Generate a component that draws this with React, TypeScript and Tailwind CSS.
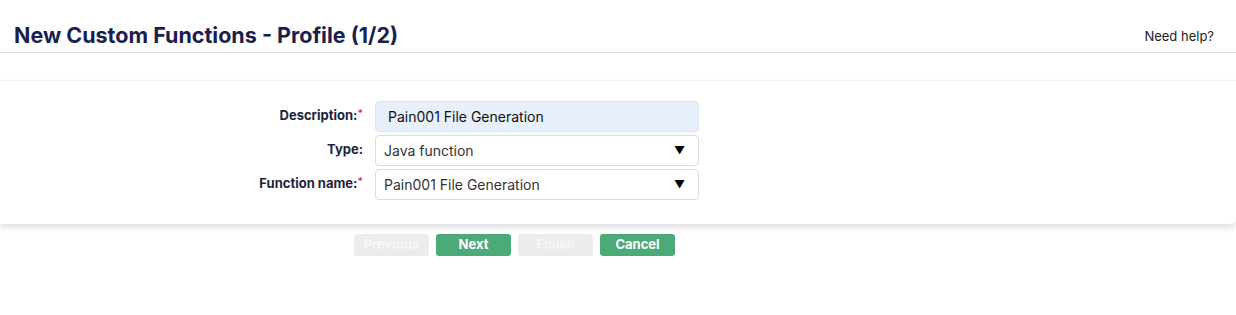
export default function App() {
  const font = { fontFamily: "Inter, 'Noto Sans', sans-serif" };
  return (
    <div className="min-h-[315px] w-[1236px] bg-white" style={font}>
      <div className="flex h-[53px] items-end justify-between border-b border-[#e0e0e0] pb-[2px] pl-[14px] pr-[22px]">
        <h1 className="text-[21.5px] font-bold leading-[30px] text-[#1b1f4e]">
          New Custom Functions - Profile (1/2)
        </h1>
        <a className="mb-[4px] text-[13px] text-[#222]">Need help?</a>
      </div>

      <div className="mt-[27px] rounded-br-[6px] border-t border-[#f0f3f8] bg-white pb-[24px] pt-[20px] shadow-[0_4px_6px_rgba(0,0,0,0.12)]">
        <div className="flex flex-col gap-[3px]">
          <Row label="Description:" required>
            <div className="flex h-[31px] w-[324px] items-center rounded-[4px] border border-[#dde3ee] bg-[#e8f0fe] px-[12px] pb-[1px] text-[14px] text-[#111]">
              Pain001 File Generation
            </div>
          </Row>
          <Row label="Type:">
            <Select value="Java function" />
          </Row>
          <Row label="Function name:" required>
            <Select value="Pain001 File Generation" />
          </Row>
        </div>
      </div>

      <div className="ml-[354px] mt-[10px] flex gap-[7px]">
        <Btn text="Previous" disabled />
        <Btn text="Next" />
        <Btn text="Finish" disabled />
        <Btn text="Cancel" />
      </div>
    </div>
  );
}

function Row({ label, required, children }: { label: string; required?: boolean; children: React.ReactNode }) {
  return (
    <div className="flex items-start">
      <div className="w-[363px] pt-[5px] text-right text-[13px] font-bold text-[#23233f]">
        {label}
        {required && <span className="align-top text-[10px] text-[#e0306e]">*</span>}
      </div>
      <div className="ml-[12px]">{children}</div>
    </div>
  );
}

function Select({ value }: { value: string }) {
  return (
    <div className="flex h-[31px] w-[324px] items-center justify-between rounded-[4px] border border-[#dcdcdc] bg-white pl-[8px] pr-[13px] text-[14px] text-[#333]">
      <span>{value}</span>
      <span className="text-[11px] text-black">▼</span>
    </div>
  );
}

function Btn({ text, disabled }: { text: string; disabled?: boolean }) {
  return (
    <button
      className={
        disabled
          ? "h-[22px] w-[75px] rounded-[3px] bg-[#ececec] text-[13px] font-bold text-[#f7f7f7]"
          : "h-[22px] w-[75px] rounded-[3px] bg-[#4caa78] text-[13px] font-bold text-white"
      }
    >
      {text}
    </button>
  );
}
